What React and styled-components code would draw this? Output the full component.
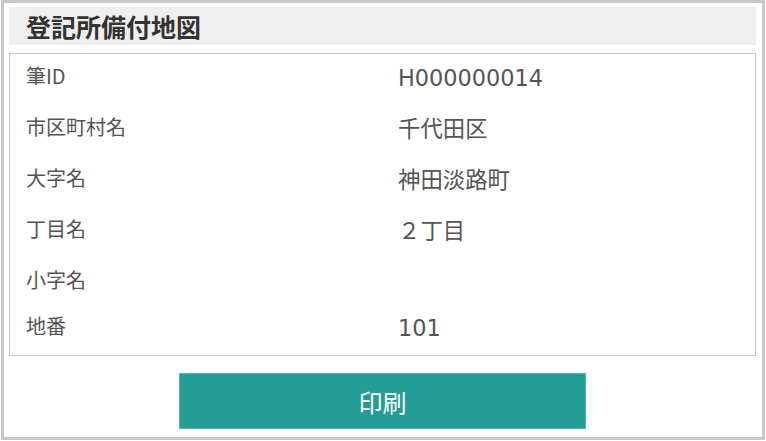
import React from 'react';
import styled, { createGlobalStyle } from 'styled-components';

const rows = [
  { label: '筆ID', value: 'H000000014' },
  { label: '市区町村名', value: '千代田区' },
  { label: '大字名', value: '神田淡路町' },
  { label: '丁目名', value: '２丁目' },
  { label: '小字名', value: '' },
  { label: '地番', value: '101' },
];

const GlobalStyle = createGlobalStyle`
  html, body {
    margin: 0;
    padding: 0;
    background: #ffffff;
  }
  body {
    font-family: "Noto Sans CJK JP", sans-serif;
  }
`;

const App = () => {
  return (
    <>
      <GlobalStyle />
      <Frame>
        <Header>
          <Title>登記所備付地図</Title>
        </Header>
        <InfoBox>
          {rows.map((row) => (
            <Row key={row.label}>
              <Label>{row.label}</Label>
              {row.value && <Value>{row.value}</Value>}
            </Row>
          ))}
        </InfoBox>
        <Actions>
          <PrintButton type="button">印刷</PrintButton>
        </Actions>
      </Frame>
    </>
  );
};

export default App;

const Frame = styled.div`
  box-sizing: border-box;
  width: 764px;
  height: 440px;
  margin-left: 1px;
  border: 3px solid #c8c8c8;
  padding: 4px 6px 8px 5px;
  display: flex;
  flex-direction: column;
  background: #fff;
`;

const Header = styled.div`
  height: 39px;
  background: #efefef;
  display: flex;
  align-items: center;
  padding-left: 17px;
`;

const Title = styled.h1`
  margin: 0;
  font-family: "Noto Sans CJK JP", sans-serif;
  font-size: 25px;
  font-weight: 700;
  line-height: 30px;
  color: #333;
`;

const InfoBox = styled.div`
  margin-top: 8px;
  border: 1px solid #c8c8c8;
  display: flex;
  flex-direction: column;
`;

const Row = styled.div`
  display: grid;
  grid-template-columns: 372px 1fr;
  align-items: start;
  padding: 9px 0 12px 16px;
`;

const Label = styled.div`
  font-family: "Noto Sans CJK JP", sans-serif;
  font-size: 20px;
  line-height: 25px;
  color: #555;
`;

const Value = styled.div`
  font-family: "DejaVu Sans", "Noto Sans CJK JP", sans-serif;
  font-size: 22.4px;
  line-height: 30px;
  color: #555;
`;

const Actions = styled.div`
  display: flex;
  justify-content: center;
  margin-top: 17px;
`;

const PrintButton = styled.button`
  box-sizing: border-box;
  width: 407px;
  height: 56px;
  border: 1px solid #5ab8b1;
  background: #239d95;
  color: #fff;
  font-family: "Noto Sans CJK JP", sans-serif;
  font-size: 24px;
  cursor: pointer;
  padding: 0;
`;
